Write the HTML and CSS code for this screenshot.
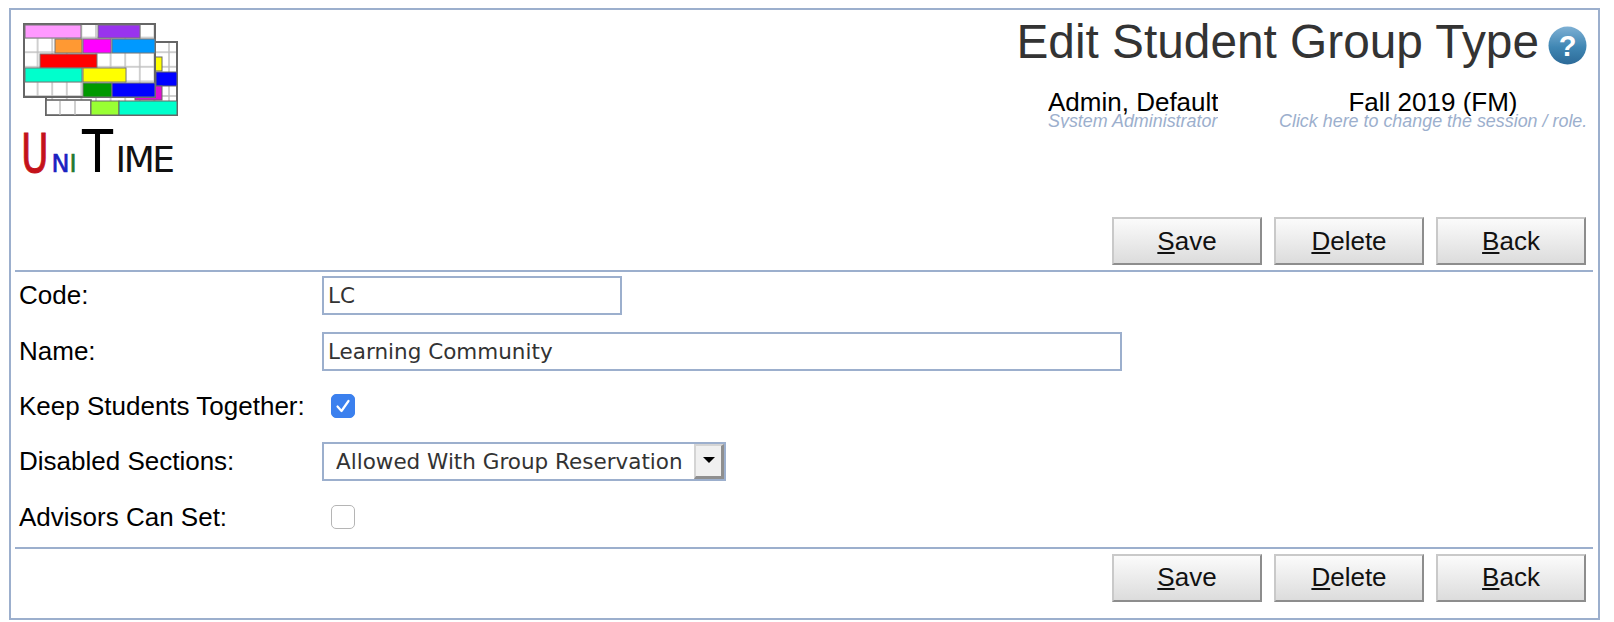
FILE: index.html
```html
<!DOCTYPE html>
<html lang="en">
<head>
<meta charset="utf-8">
<title>Edit Student Group Type</title>
<link rel="stylesheet" href="styles.css">
</head>
<body>
<main class="frame">
  <header class="header">
    <div class="logo">
      <svg class="logo-grid" width="156" height="94" viewBox="0 0 156 94">
        <defs>
          <pattern id="cells" width="14.6" height="14.6" patternUnits="userSpaceOnUse">
            <rect width="14.6" height="14.6" fill="#fff" stroke="#bdbdbd" stroke-width="1.4"/>
          </pattern>
        </defs>
        <rect x="23" y="19" width="131" height="73" fill="url(#cells)" stroke="#666" stroke-width="2"/>
        <rect x="132" y="34" width="7" height="14" fill="#ff0" stroke="#666" stroke-width="1"/>
        <rect x="133" y="49" width="21" height="14" fill="#00f" stroke="#666" stroke-width="1"/>
        <rect x="112" y="63" width="27" height="14" fill="#e010d0" stroke="#666" stroke-width="1"/>
        <rect x="23" y="77" width="45" height="15" fill="#fff" stroke="#666" stroke-width="1.6"/>
        <path d="M37 78v14M52 78v14" stroke="#bdbdbd" stroke-width="1.4"/>
        <rect x="68" y="78" width="28" height="14" fill="#9f3" stroke="#666" stroke-width="1"/>
        <rect x="96" y="78" width="58" height="14" fill="#0fc" stroke="#666" stroke-width="1"/>
        <rect x="1" y="1" width="131" height="73" fill="url(#cells)" stroke="#666" stroke-width="2"/>
        <rect x="2" y="2" width="56" height="13" fill="#f9f" stroke="#777" stroke-width="1"/>
        <rect x="75" y="2" width="42" height="13" fill="#93e" stroke="#777" stroke-width="1"/>
        <rect x="32" y="16" width="27" height="14" fill="#f93" stroke="#777" stroke-width="1"/>
        <rect x="60" y="16" width="28" height="14" fill="#f0f" stroke="#777" stroke-width="1"/>
        <rect x="89" y="16" width="43" height="14" fill="#09f" stroke="#777" stroke-width="1"/>
        <rect x="17" y="31" width="57" height="14" fill="#f00" stroke="#777" stroke-width="1"/>
        <rect x="2" y="45" width="57" height="14" fill="#0fc" stroke="#777" stroke-width="1"/>
        <rect x="60" y="45" width="43" height="14" fill="#ff0" stroke="#777" stroke-width="1"/>
        <rect x="60" y="60" width="29" height="14" fill="#090" stroke="#777" stroke-width="1"/>
        <rect x="89" y="60" width="43" height="14" fill="#00f" stroke="#777" stroke-width="1"/>
      </svg>
      <div class="wordmark"><span class="w-u">U</span><span class="w-n">N</span><span class="w-i">I</span><span class="w-t">T</span><span class="w-r">IME</span></div>
    </div>
    <div class="head-right">
      <div class="title-row">
        <h1 class="title">Edit Student Group Type</h1>
        <svg class="help" width="39" height="39" viewBox="0 0 39 39">
          <defs>
            <linearGradient id="helpfill" x1="0" y1="0" x2="0" y2="1">
              <stop offset="0" stop-color="#7eb0d4"/>
              <stop offset=".55" stop-color="#3f86b3"/>
              <stop offset="1" stop-color="#2c6a98"/>
            </linearGradient>
          </defs>
          <circle cx="19.5" cy="19.5" r="19" fill="url(#helpfill)"/>
          <text x="19.5" y="30" text-anchor="middle" class="help-mark">?</text>
        </svg>
      </div>
      <div class="session">
        <div class="who">
          <div class="main-line">Admin, Default</div>
          <div class="sub-line">System Administrator</div>
        </div>
        <div class="term">
          <div class="main-line">Fall 2019 (FM)</div>
          <div class="sub-line">Click here to change the session / role.</div>
        </div>
      </div>
    </div>
  </header>

  <div class="actions">
    <button class="btn" type="button"><u>S</u>ave</button>
    <button class="btn" type="button"><u>D</u>elete</button>
    <button class="btn" type="button"><u>B</u>ack</button>
  </div>
  <hr class="rule">

  <form class="form">
    <label class="label">Code:</label>
    <div class="field"><input class="input input-code" type="text" value="LC"></div>
    <label class="label">Name:</label>
    <div class="field"><input class="input input-name" type="text" value="Learning Community"></div>
    <label class="label">Keep Students Together:</label>
    <div class="field"><span class="check check-on">
      <svg width="24" height="24" viewBox="0 0 24 24"><path d="M6.5 12.5l4 4.5 7-10" fill="none" stroke="#fff" stroke-width="2.2" stroke-linecap="round" stroke-linejoin="round"/></svg>
    </span></div>
    <label class="label">Disabled Sections:</label>
    <div class="field"><div class="select-wrap">
      <select class="select"><option>Allowed With Group Reservation</option></select>
      <span class="select-arrow"></span>
    </div></div>
    <label class="label">Advisors Can Set:</label>
    <div class="field"><span class="check"></span></div>
  </form>

  <hr class="rule rule-bottom">
  <div class="actions actions-bottom">
    <button class="btn" type="button"><u>S</u>ave</button>
    <button class="btn" type="button"><u>D</u>elete</button>
    <button class="btn" type="button"><u>B</u>ack</button>
  </div>
</main>
</body>
</html>
```

FILE: styles.css
```css
* { box-sizing: border-box; }
html, body { margin: 0; padding: 0; background: #fff; }
body { padding: 8px 14px 0 9px; font-family: "Liberation Sans", Arial, sans-serif; color: #000; }

.frame {
  border: 2px solid #9cafcd;
  height: 612px;
  padding: 0 4px;
  display: flex;
  flex-direction: column;
}

.header { display: flex; justify-content: space-between; height: 207px; padding-top: 13px; }
.logo { padding-left: 8px; }
.logo-grid { display: block; }
.wordmark {
  margin-top: 7px;
  margin-left: -2px;
  height: 56px;
  line-height: 56px;
  font-family: "DejaVu Sans", sans-serif;
  display: flex;
  align-items: baseline;
}
.w-u { color: #c4121a; font-size: 54px; transform: scaleX(.7); transform-origin: left; margin-right: -9px; -webkit-text-stroke: 1px #c4121a; }
.w-n { color: #1a22c0; font-size: 24px; -webkit-text-stroke: .6px #1a22c0; }
.w-i { color: #1f7a2e; font-size: 24px; margin-right: 5px; -webkit-text-stroke: .6px #1f7a2e; }
.w-t { color: #000; font-size: 59px; transform: scaleX(.86); transform-origin: left; margin-right: -2px; }
.w-r { color: #111; font-size: 36px; letter-spacing: -2.5px; }

.head-right { display: flex; flex-direction: column; align-items: flex-end; }
.title-row { display: flex; align-items: center; gap: 9px; margin-right: 7px; height: 44px; }
.title { margin: 0 0 7px; font-weight: 400; font-size: 47.8px; line-height: 44px; color: #333; white-space: nowrap; }
.help { display: block; }
.help-mark { font: 700 29px "Liberation Sans", sans-serif; fill: #fff; }

.session { display: flex; margin-top: 23px; margin-right: 7px; }
.who { width: 170px; overflow: hidden; margin-right: 61px; }
.term { width: 308px; text-align: center; }
.main-line { font-size: 26px; line-height: 24px; white-space: nowrap; }
.sub-line { font-size: 17.9px; line-height: 14px; font-style: italic; color: #9cafcd; white-space: nowrap; }

.actions { display: flex; justify-content: flex-end; gap: 12px; padding-right: 8px; }
.actions-bottom { margin-top: 5px; }
.btn {
  width: 150px;
  height: 48px;
  font: 400 26px "Liberation Sans", sans-serif;
  color: #111;
  padding: 0;
  background: linear-gradient(#fbfbfb, #dcdcdc);
  border: 2px solid;
  border-color: #c9c9c9 #8d8d8d #8d8d8d #c9c9c9;
}
.rule { border: 0; height: 2px; margin: 5px 0 0; background: #9cafcd; width: 1578px; }
.rule-bottom { margin-top: 2px; }

.form {
  display: grid;
  grid-template-columns: 303px 1fr;
  grid-auto-rows: 55.4px;
  align-items: center;
  margin-top: -4px;
  padding-left: 4px;
  flex: none;
}
.label { font-size: 26px; line-height: 30px; margin-top: -1px; white-space: nowrap; }
.field { display: flex; align-items: center; }

.input {
  height: 39px;
  border: 2px solid #9cafcd;
  padding: 0 4px;
  font: 400 21.5px "DejaVu Sans", sans-serif;
  color: #333;
  background: #fff;
  outline: none;
}
.input-code { width: 300px; }
.input-name { width: 800px; }

.check {
  display: block;
  width: 24px;
  height: 24px;
  margin-left: 9px;
  border-radius: 5px;
  border: 1px solid #b5b5b5;
  background: #fff;
}
.check-on { background: #3b80ee; border-color: #3b80ee; }
.check-on svg { display: block; margin: -1px; }

.select-wrap { position: relative; width: 404px; height: 39px; }
.select {
  appearance: none;
  width: 100%;
  height: 100%;
  border: 2px solid #9cafcd;
  border-radius: 0;
  background: #fff;
  padding: 0 0 0 12px;
  font: 400 21.5px "DejaVu Sans", sans-serif;
  color: #333;
}
.select-arrow {
  position: absolute;
  top: 2px;
  right: 2px;
  width: 30px;
  height: 35px;
  background: #f0f0f0;
  border-style: solid;
  border-width: 2px 3px 3px 2px;
  border-color: #d4d4d4 #8f8f8f #8f8f8f #d4d4d4;
}
.select-arrow::after {
  content: "";
  position: absolute;
  left: 7px;
  top: 11px;
  border-style: solid;
  border-width: 6px 6px 0;
  border-color: #000 transparent transparent;
}
```
